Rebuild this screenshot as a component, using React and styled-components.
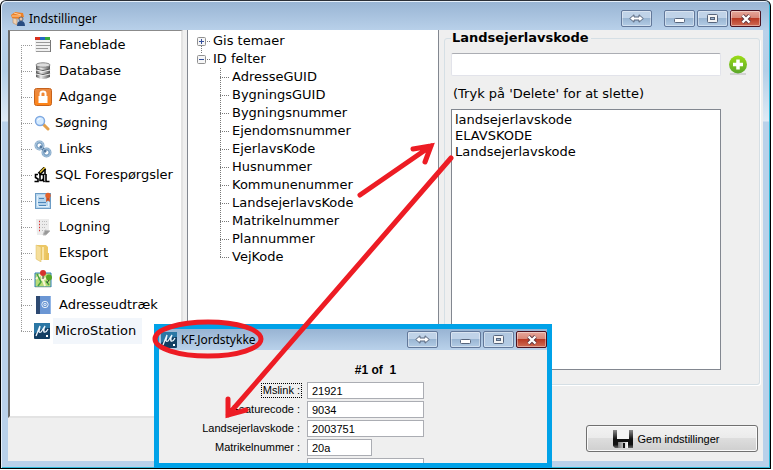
import { useState } from "react";
import styled, { createGlobalStyle, css } from "styled-components";

const GlobalStyle = createGlobalStyle`
  * {
    box-sizing: border-box;
  }

  body {
    margin: 0 2px 1px 0;
    background: #fff;
    color: #000;
    font-family: Verdana, "DejaVu Sans", sans-serif;
    font-size: 13px;
  }

  button,
  input,
  select {
    font: inherit;
    color: inherit;
  }
`;

const Desktop = styled.div`
  position: relative;
`;

const Window = styled.main`
  display: flex;
  flex-direction: column;
  min-height: calc(100vh - 1px);
  padding: 0 7px 7px;
  border: 1px solid #000;
  border-top-color: #2b2f36;
  border-radius: 6px 6px 0 0;
  background: linear-gradient(
    #98b4d3 0,
    #b9d1ea 30px,
    #b4cfe8 70px,
    #dfeaf5 120px,
    #b9d1ea 121px,
    #b9d1ea 100%
  );
  box-shadow:
    inset 1px 1px #e6f0fa,
    inset -1px -1px #2fb9d8;
`;

const TitleBar = styled.header`
  display: flex;
  align-items: center;
  gap: 4px;
  height: ${({ $small }) => ($small ? "21px" : "29px")};
  padding: ${({ $small }) => ($small ? "0 0 0 2px" : "6px 2px 0")};
  ${({ $small }) =>
    $small &&
    css`
      background: linear-gradient(#98b4d3, #b9d1ea);
    `}
`;

const Title = styled.h1`
  flex: 1;
  margin: 0;
  font-family: "Segoe UI", "Noto Sans", sans-serif;
  font-size: 12px;
  font-weight: 400;
  line-height: 16px;
`;

const CaptionButtons = styled.div`
  display: flex;
  gap: 2px;
`;

const captionColors = {
  normal: "linear-gradient(#c0d3e8 0 45%, #9ab6d3 50%, #b3cce5)",
  faded: "linear-gradient(#b0c6de, #b4cce6)",
  close: "linear-gradient(#e6a79b 0, #d98878 45%, #b93a24 50%, #cf6c55)",
};

const CaptionButton = styled.button`
  display: flex;
  align-items: center;
  justify-content: center;
  width: 31px;
  height: 17px;
  padding: 0;
  border: 1px solid ${({ $kind }) => ($kind === "close" ? "#4c1220" : "#62789a")};
  border-radius: 2px;
  background: ${({ $kind }) => captionColors[$kind || "normal"]};
  box-shadow: inset 0 0 0 1px rgba(255, 255, 255, 0.4);

  &:first-child {
    margin-right: 10px;
  }
`;

const Panels = styled.div`
  display: grid;
  flex: 1;
  grid-template-columns: 175fr 256fr 324fr;
  background: #efefef;
`;

const SectionPanel = styled.nav`
  border: 2px solid;
  border-color: #8b8b8b #e3e3e3 #e3e3e3 #6b6b6b;
  border-top-width: 1px;
  background: #fff;
`;

const SectionList = styled.ul`
  margin: 0;
  padding: 1px 0 0 11px;
  list-style: none;
`;

const SectionItem = styled.li`
  display: flex;
  align-items: center;
  height: 26px;
  background-image:
    repeating-linear-gradient(#999 0 1px, transparent 1px 2px),
    repeating-linear-gradient(90deg, #999 0 1px, transparent 1px 2px);
  background-size:
    1px 100%,
    11px 1px;
  background-position:
    0 0,
    0 13px;
  background-repeat: no-repeat;

  &:first-child {
    background-size:
      1px 50%,
      11px 1px;
    background-position:
      0 100%,
      0 13px;
  }

  &:last-child {
    background-size:
      1px 50%,
      11px 1px;
  }
`;

const SectionButton = styled.button`
  display: flex;
  align-items: center;
  gap: ${({ $narrow }) => ($narrow ? "3px" : "5px")};
  margin-left: 13px;
  padding: 0;
  border: 0;
  background: none;
  line-height: 26px;
  white-space: nowrap;

  svg {
    flex: none;
  }
`;

const SectionName = styled.span`
  padding: 0 6px 0 2px;
  background: ${({ $selected }) => ($selected ? "#f2f6fb" : "transparent")};
`;

const TreePanel = styled.section`
  margin-left: 4px;
  padding: 2px 0 0 9px;
  border: 1px solid #828790;
  border-top: 0;
  background: #fff;
  line-height: 18px;
`;

const TreeBranch = styled.button`
  display: flex;
  align-items: center;
  height: 18px;
  padding: 0;
  border: 0;
  background: none;

  span {
    margin-left: 3px;
  }
`;

const TreeLeaves = styled.ul`
  margin: 0 0 0 23px;
  padding: 0;
  list-style: none;
`;

const TreeLeaf = styled.li`
  height: 18px;
  padding-left: 12px;
  background-image:
    repeating-linear-gradient(#777 0 1px, transparent 1px 2px),
    repeating-linear-gradient(90deg, #777 0 1px, transparent 1px 2px);
  background-size:
    1px 100%,
    9px 1px;
  background-position:
    0 0,
    0 9px;
  background-repeat: no-repeat;

  &:last-child {
    background-size:
      1px 50%,
      9px 1px;
  }
`;

const DetailPanel = styled.section`
  padding: 0 3px 0 5px;
`;

const Group = styled.fieldset`
  min-width: 0;
  margin: 0;
  padding: 7px 11px 14px 6px;
  border: 1px solid #d5dfe5;
  border-radius: 3px;
  box-shadow: 1px 1px #fff;
`;

const GroupName = styled.legend`
  padding: 0 2px 0 1px;
  font-weight: 700;
  line-height: 16px;
`;

const AddRow = styled.div`
  display: flex;
  align-items: center;
  gap: 7px;
`;

const AliasInput = styled.input`
  flex: 1;
  min-width: 0;
  height: 23px;
  padding: 0 4px;
  border: 1px solid #e2e3ea;
  border-top-color: #abadb3;
  border-radius: 2px;
  background: #fff;
`;

const AddButton = styled.button`
  display: flex;
  padding: 0;
  border: 0;
  background: none;
`;

const ListLabel = styled.label`
  display: block;
  padding: 10px 2px 7px;
  line-height: 16px;
`;

const AliasList = styled.select`
  display: block;
  width: calc(100% - 27px);
  height: 261px;
  padding: 2px 0;
  border: 1px solid #828790;
  border-radius: 0;
  outline: 0;
  background: #fff;
  overflow: hidden;

  option {
    min-height: 16px;
    padding: 0 3px;
    line-height: 16px;
  }
`;

const Footer = styled.footer`
  display: flex;
  justify-content: flex-end;
  padding: 7px 5px 9px;
  background: #efefef;
`;

const SaveButton = styled.button`
  display: flex;
  align-items: center;
  justify-content: center;
  gap: 4px;
  width: 172px;
  height: 27px;
  padding: 0 12px 0 0;
  border: 1px solid #707070;
  border-radius: 3px;
  background: linear-gradient(#f2f2f2 0, #ebebeb 48%, #dddddd 50%, #cfcfcf);
  box-shadow: inset 0 0 0 1px #fafafa;
  font-family: "Liberation Sans", Arial, sans-serif;
  font-size: 11px;
`;

const Popup = styled.section`
  position: absolute;
  left: 154px;
  bottom: 1px;
  width: 398px;
  height: 144px;
  overflow: hidden;
  border: 5px solid #00a2e8;
  background: #efefef;
  font-family: "Liberation Sans", Arial, sans-serif;
  font-size: 11px;
`;

const RecordCount = styled.h2`
  margin: 12px 0 4px;
  padding-left: 45px;
  font-size: 12px;
  font-weight: 700;
  line-height: 16px;
  text-align: center;
  white-space: pre;
`;

const RecordForm = styled.form`
  display: flex;
  flex-direction: column;
  gap: 2px;
`;

const FieldRow = styled.div`
  display: grid;
  grid-template-columns: 143px 1fr;
  align-items: center;
  gap: 5px;
`;

const FieldLabel = styled.label`
  justify-self: end;
  padding: 0 1px;
  border: 1px dotted ${({ $focused }) => ($focused ? "#000" : "transparent")};
  line-height: 13px;
`;

const FieldInput = styled.input`
  width: ${({ $short }) => ($short ? "65px" : "117px")};
  height: 17px;
  padding: 0 4px;
  border: 1px solid #abadb3;
  background: #fff;
`;

const Annotations = styled.svg`
  position: absolute;
  top: 0;
  left: 0;
  pointer-events: none;
`;

const TabsIcon = () => (
  <svg width="18" height="18">
    <path d="M1 1h5v3H1z" fill="#d8301c" />
    <path d="M6 1h5v3H6z" fill="#2467c4" />
    <path d="M11 1h5v3h-5z" fill="#35a83a" />
    <path d="M1 4h15v12H1z" fill="#f1f1f1" />
    <path d="M2 6.500h14M2 9.500h14M2 12.500h12M2 15.500h14" stroke="#999" />
    <path d="M16.500 4v12" stroke="#777" />
  </svg>
);

const DatabaseIcon = () => (
  <svg width="18" height="18">
    <defs>
      <linearGradient id="steel">
        <stop offset="0" stopColor="#555" />
        <stop offset="0.35" stopColor="#eee" />
        <stop offset="1" stopColor="#555" />
      </linearGradient>
    </defs>
    <path d="M2 3v12q7 4 14 0V3z" fill="url(#steel)" />
    <ellipse cx="9" cy="3" rx="7" ry="2.200" fill="#ddd" stroke="#888" />
    <path d="M2 7q7 3 14 0M2 11q7 3 14 0" fill="none" stroke="#555" strokeWidth="1.200" />
    <path d="M2 8q7 3 14 0M2 12q7 3 14 0" fill="none" stroke="#eee" />
  </svg>
);

const LockIcon = () => (
  <svg width="18" height="18">
    <defs>
      <linearGradient id="orange" x2="0" y2="1">
        <stop offset="0" stopColor="#e98a45" />
        <stop offset="1" stopColor="#ff8416" />
      </linearGradient>
    </defs>
    <rect x="0.500" y="0.500" width="17" height="17" rx="2" fill="url(#orange)" stroke="#c6621c" />
    <rect x="4.500" y="8" width="9" height="7" fill="#fff" />
    <path d="M6.500 8V5.500q0-2 2.500-2t2.500 2V8" fill="none" stroke="#fff" strokeWidth="2" />
  </svg>
);

const SearchIcon = () => (
  <svg width="16" height="16">
    <path d="m9 9 5 5" stroke="#e3a04b" strokeWidth="3" strokeLinecap="round" />
    <circle cx="6" cy="6" r="4.500" fill="#d5ebff" stroke="#7fa9e2" strokeWidth="1.500" />
    <path d="M3.500 5.500q1-2 3-2" fill="none" stroke="#fff" />
  </svg>
);

const LinksIcon = () => (
  <svg width="18" height="18" fill="none">
    <circle cx="5.500" cy="5.500" r="3.500" stroke="#7ba1c4" strokeWidth="3" />
    <circle cx="12.500" cy="12.500" r="3.500" stroke="#7ba1c4" strokeWidth="3" />
    <path d="m6 6 6 6" stroke="#55799f" strokeWidth="2.500" />
    <circle cx="5.500" cy="5.500" r="4" stroke="#b6cfe4" />
    <circle cx="12.500" cy="12.500" r="4" stroke="#a8c5de" />
  </svg>
);

const SqlIcon = () => (
  <svg width="16" height="16" fill="none" stroke="#000" strokeWidth="1.600">
    <path d="M4 7.500H1.500v3L4 12v2.500H.5M6 7.500h3.500v6H6zM8 12l2.500 3M12 7v7.500h3.500" />
    <path d="m5 7 6-6" strokeWidth="3.500" />
    <path d="m6 5.500 5-5" stroke="#d9b62b" strokeWidth="1.600" />
    <path d="m11 2v6" stroke="#000" />
  </svg>
);

const LicenseIcon = () => (
  <svg width="18" height="18">
    <rect x="1.500" y="1.500" width="15" height="15" fill="#b4d3ec" stroke="#6c9cc5" />
    <path d="M3.500 14V4h8M3.500 14.500h11V10" fill="none" stroke="#e3f1fb" />
    <path d="M5 6.500h5M4 10.500h8M5 13.500h7" stroke="#4d86ba" />
    <path d="m12.500 5-.5 5 2-1.500 2 1.500-.5-5" fill="#c94e22" />
    <circle cx="14" cy="3.500" r="2.700" fill="#e2622b" />
  </svg>
);

const LogIcon = () => (
  <svg width="18" height="18">
    <path d="M2 1h13v11l-3 5H3z" fill="#ececec" />
    <path d="m9 17 2-5 5 1-4 4z" fill="#999" stroke="#bbb" />
    <path d="M5 3.500h1M5 6.500h1M5 9.500h1M5 12.500h1" stroke="#d93434" strokeWidth="1.500" />
    <path d="M8 3.500h5M8 6.500h5M8 9.500h4M8 12.500h2" stroke="#bcbcbc" strokeDasharray="1 1" />
  </svg>
);

const FolderIcon = () => (
  <svg width="18" height="18">
    <path d="M3 1h9l2 2v13H3z" fill="#ecc765" />
    <path d="m2 1 5 2v15l-5-3z" fill="#f5de9b" stroke="#dfbd63" strokeWidth="0.500" />
    <path d="M8 3h2v13H8z" fill="#fae4a5" />
    <path d="M12 9h3v7h-3z" fill="#e9c25c" />
  </svg>
);

const MapIcon = () => (
  <svg width="18" height="18">
    <path d="M1 3h16v14H1z" fill="#b9dc78" stroke="#2f7fb5" />
    <path d="m2 9 5-5 4 12M7 10l9-3" fill="none" stroke="#f8f4d5" strokeWidth="2" />
    <path d="m3 4 4 8-3 4M12 11l3 4" fill="none" stroke="#45a442" strokeWidth="1.500" />
    <path d="M1 17.500h16" stroke="#e2e2e2" />
    <circle cx="9" cy="3" r="3" fill="#d6322e" />
    <circle cx="15" cy="7.500" r="3" fill="#58a526" />
    <path d="M9 6v3M15 10l-2 3" stroke="#333" />
  </svg>
);

const AddressIcon = () => (
  <svg width="18" height="18">
    <rect x="2" y="0" width="15" height="18" rx="1" fill="#6b96d4" />
    <path d="M2 0h4v18H2z" fill="#2e4a72" />
    <path d="M16.500 1v16" stroke="#93b6e6" />
    <circle cx="11" cy="8.500" r="3.200" fill="none" stroke="#e5effa" />
    <circle cx="11" cy="8.500" r="1.200" fill="none" stroke="#e5effa" />
  </svg>
);

const MicroStationIcon = () => (
  <svg width="16" height="16">
    <rect width="16" height="16" rx="1" fill="#123e63" />
    <path d="M0 0h16v5Q8 4 0 11z" fill="#2b77a5" />
    <path
      d="M6 3 2 13M6 3 5 8q0 2 2 1l4-6q-2 4-1 6 2 1 4-3"
      fill="none"
      stroke="#f0f8ff"
      strokeWidth="1.300"
    />
    <path d="M12 12h2v2h-2z" fill="#fff" />
  </svg>
);

const AppIcon = () => (
  <svg width="15" height="15">
    <path d="m1 4 4-3 8 1 1 4-4 2-8-1z" fill="#ee8126" />
    <path d="M2 5h9M4 2l7 2" stroke="#ffd0a0" />
    <path d="M3 7v5l4 2V8z" fill="#ecd1b4" stroke="#b77b48" strokeWidth="0.500" />
    <circle cx="11" cy="8" r="2" fill="#e6c5a8" stroke="#31496c" strokeWidth="0.700" />
    <path d="M7 15q0-5 4-5t4 5z" fill="#284c81" />
  </svg>
);

const PlusIcon = () => (
  <svg width="20" height="20">
    <defs>
      <linearGradient id="lime" x2="0" y2="1">
        <stop offset="0" stopColor="#9bdc16" />
        <stop offset="1" stopColor="#5aa62a" />
      </linearGradient>
    </defs>
    <path d="M2 19h16" stroke="#c9c9c9" strokeWidth="1.500" />
    <circle cx="10" cy="9.500" r="9" fill="url(#lime)" />
    <path d="M10 4.500v10M5 9.500h10" stroke="#fff" strokeWidth="3.500" />
  </svg>
);

const FloppyIcon = () => (
  <svg width="21" height="20">
    <defs>
      <linearGradient id="disk" x2="0" y2="1">
        <stop offset="0" stopColor="#8a8a8a" />
        <stop offset="0.500" stopColor="#111" />
        <stop offset="0.800" stopColor="#111" />
        <stop offset="1" stopColor="#666" />
      </linearGradient>
      <linearGradient id="shutter">
        <stop offset="0" stopColor="#777" />
        <stop offset="1" stopColor="#fff" />
      </linearGradient>
    </defs>
    <path d="M0 1h20v18H2l-2-2z" fill="url(#disk)" />
    <path d="M4 1h12v9H4z" fill="#f4f4f4" />
    <path d="M5 13h10v6H5z" fill="url(#shutter)" />
    <path d="M10 14h2v5h-2z" fill="#111" />
  </svg>
);

const ExpandIcon = ({ open }) => (
  <svg width="13" height="18">
    <path d={open ? "M4.500 0v4" : "M4.500 14v4"} stroke="#777" strokeDasharray="1 1" />
    <rect x="0.500" y="5.500" width="8" height="8" rx="1" fill="#f6f6f6" stroke="#919191" />
    <path d={open ? "M2 9.500h5" : "M2 9.500h5M4.500 7v5"} stroke="#354f9b" />
    <path d="M10 9.500h3" stroke="#777" strokeDasharray="1 1" />
  </svg>
);

const SwapGlyph = () => (
  <svg width="15" height="9">
    <path
      d="M.7 4.500 5 .8V3h5V.8l4.300 3.700L10 8.200V6H5v2.200z"
      fill="#fff"
      stroke="#56657c"
    />
  </svg>
);

const MinimizeGlyph = () => (
  <svg width="12" height="9">
    <rect x="0.500" y="4.500" width="10" height="4" rx="1" fill="#fff" stroke="#56657c" />
  </svg>
);

const MaximizeGlyph = () => (
  <svg width="11" height="9">
    <rect x="0.500" y="0.500" width="10" height="8" rx="1" fill="#f4f4f4" stroke="#56657c" />
    <rect x="3.500" y="3.500" width="4" height="2" fill="#9bb4d0" stroke="#56657c" />
  </svg>
);

const CloseGlyph = () => (
  <svg width="12" height="10">
    <path d="m2.500 1.500 7 7m0-7-7 7" stroke="#5c3640" strokeWidth="4" />
    <path d="m2.500 1.500 7 7m0-7-7 7" stroke="#fff" strokeWidth="2.400" />
  </svg>
);

const WindowButtons = ({ fixedSize }) => (
  <CaptionButtons>
    <CaptionButton type="button" aria-label="Flyt">
      <SwapGlyph />
    </CaptionButton>
    <CaptionButton type="button" aria-label="Minimer">
      <MinimizeGlyph />
    </CaptionButton>
    <CaptionButton type="button" aria-label="Maksimer" $kind={fixedSize ? "faded" : "normal"}>
      <MaximizeGlyph />
    </CaptionButton>
    <CaptionButton type="button" aria-label="Luk" $kind="close">
      <CloseGlyph />
    </CaptionButton>
  </CaptionButtons>
);

const sections = [
  { name: "Faneblade", Icon: TabsIcon },
  { name: "Database", Icon: DatabaseIcon },
  { name: "Adgange", Icon: LockIcon },
  { name: "Søgning", Icon: SearchIcon, narrow: true },
  { name: "Links", Icon: LinksIcon },
  { name: "SQL Forespørgsler", Icon: SqlIcon, narrow: true },
  { name: "Licens", Icon: LicenseIcon },
  { name: "Logning", Icon: LogIcon },
  { name: "Eksport", Icon: FolderIcon },
  { name: "Google", Icon: MapIcon },
  { name: "Adresseudtræk", Icon: AddressIcon },
  { name: "MicroStation", Icon: MicroStationIcon, narrow: true },
];

const idFields = [
  "AdresseGUID",
  "BygningsGUID",
  "Bygningsnummer",
  "Ejendomsnummer",
  "EjerlavsKode",
  "Husnummer",
  "Kommunenummer",
  "LandsejerlavsKode",
  "Matrikelnummer",
  "Plannummer",
  "VejKode",
];

const recordFields = [
  { id: "mslink", label: "Mslink :", value: "21921", focused: true },
  { id: "featurecode", label: "Featurecode :", value: "9034" },
  { id: "landsejerlavskode", label: "Landsejerlavskode :", value: "2003751" },
  { id: "matrikelnummer", label: "Matrikelnummer :", value: "20a", short: true },
  { id: "next", label: "", value: "" },
];

const App = () => {
  const [selected, setSelected] = useState("MicroStation");
  const [open, setOpen] = useState(true);
  const [aliases, setAliases] = useState([
    "landsejerlavskode",
    "ELAVSKODE",
    "Landsejerlavskode",
  ]);
  const [draft, setDraft] = useState("");

  const addAlias = () => {
    if (!draft) return;
    setAliases([...aliases, draft]);
    setDraft("");
  };

  const deleteAlias = (event) => {
    if (event.key !== "Delete") return;
    setAliases(aliases.filter((alias) => alias !== event.target.value));
  };

  return (
    <Desktop>
      <GlobalStyle />
      <Window>
        <TitleBar>
          <AppIcon />
          <Title>Indstillinger</Title>
          <WindowButtons />
        </TitleBar>
        <Panels>
          <SectionPanel>
            <SectionList>
              {sections.map(({ name, Icon, narrow }) => (
                <SectionItem key={name}>
                  <SectionButton type="button" $narrow={narrow} onClick={() => setSelected(name)}>
                    <Icon />
                    <SectionName $selected={name === selected}>{name}</SectionName>
                  </SectionButton>
                </SectionItem>
              ))}
            </SectionList>
          </SectionPanel>
          <TreePanel>
            <TreeBranch type="button">
              <ExpandIcon />
              <span>Gis temaer</span>
            </TreeBranch>
            <TreeBranch type="button" aria-expanded={open} onClick={() => setOpen(!open)}>
              <ExpandIcon open={open} />
              <span>ID felter</span>
            </TreeBranch>
            {open && (
              <TreeLeaves>
                {idFields.map((field) => (
                  <TreeLeaf key={field}>{field}</TreeLeaf>
                ))}
              </TreeLeaves>
            )}
          </TreePanel>
          <DetailPanel>
            <Group>
              <GroupName>Landsejerlavskode</GroupName>
              <AddRow>
                <AliasInput
                  aria-label="Landsejerlavskode"
                  value={draft}
                  onChange={(event) => setDraft(event.target.value)}
                />
                <AddButton type="button" aria-label="Tilføj" onClick={addAlias}>
                  <PlusIcon />
                </AddButton>
              </AddRow>
              <ListLabel htmlFor="aliases">(Tryk på 'Delete' for at slette)</ListLabel>
              <AliasList id="aliases" size={16} onKeyDown={deleteAlias}>
                {aliases.map((alias) => (
                  <option key={alias}>{alias}</option>
                ))}
              </AliasList>
            </Group>
          </DetailPanel>
        </Panels>
        <Footer>
          <SaveButton type="button">
            <FloppyIcon />
            Gem indstillinger
          </SaveButton>
        </Footer>
      </Window>
      <Popup>
        <TitleBar $small>
          <MicroStationIcon />
          <Title as="h2">KF.Jordstykke</Title>
          <WindowButtons fixedSize />
        </TitleBar>
        <RecordCount>#1 of  1</RecordCount>
        <RecordForm>
          {recordFields.map(({ id, label, value, focused, short }) => (
            <FieldRow key={id}>
              <FieldLabel htmlFor={id} $focused={focused}>
                {label}
              </FieldLabel>
              <FieldInput id={id} defaultValue={value} $short={short} />
            </FieldRow>
          ))}
        </RecordForm>
      </Popup>
      <Annotations width="600" height="469" fill="none" stroke="#ed1c24" strokeWidth="5">
        <path d="m360 195 71-49m-18 3 18-3-6 16" strokeLinecap="round" />
        <path d="M451 158 228 415m0-16v16l18-5" strokeLinecap="round" />
        <ellipse cx="208" cy="339" rx="53" ry="17" />
      </Annotations>
    </Desktop>
  );
};

export default App;
